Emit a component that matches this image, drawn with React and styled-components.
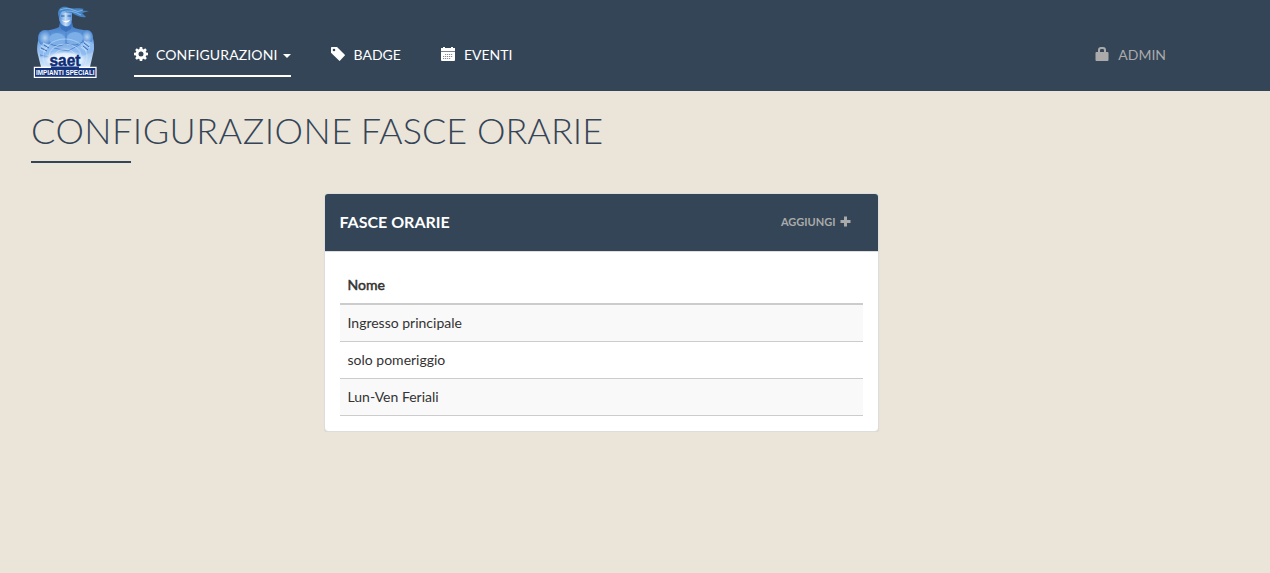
import React from "react";
import styled, { createGlobalStyle } from "styled-components";

const ink = "#344557";

const GlobalStyle = createGlobalStyle`
  * { box-sizing: border-box; }
  body {
    margin: 0;
    background: #ebe4d9;
    color: #333;
    font: 14px/20px Lato, "Liberation Sans", sans-serif;
  }
`;

const Navbar = styled.nav`
  display: flex;
  align-items: flex-start;
  height: 91px;
  padding: 0 104px 0 31px;
  background: ${ink};
`;

const Brand = styled.a`
  display: block;
  width: 69px;
  height: 82px;
  margin-right: 34px;
  svg { display: block; overflow: visible; }
`;

const Menu = styled.div`
  display: flex;
  flex: 1;
  gap: 40px;
  padding-top: 45px;
`;

const MenuItem = styled.a`
  display: flex;
  align-items: center;
  height: 32px;
  padding-bottom: 10px;
  color: ${(p) => (p.$muted ? "#aaa" : "#fff")};
  border-bottom: 2px solid ${(p) => (p.$active ? "#fff" : "transparent")};
  white-space: nowrap;
  letter-spacing: ${(p) => (p.$active ? "0.12px" : "0")};
  margin-left: ${(p) => (p.$muted ? "auto" : "0")};
  svg {
    display: block;
    overflow: visible;
    margin: -2px ${(p) => (p.$active ? "8px" : "9px")} 0 0;
    flex: none;
  }
`;

const Caret = styled.span`
  margin: 2px 0 0 5px;
  border-top: 4px solid currentColor;
  border-left: 4px solid transparent;
  border-right: 4px solid transparent;
`;

const Main = styled.main`
  padding: 19px 31px 0;
`;

const Title = styled.h1`
  margin: 0;
  font-size: 36px;
  font-weight: 300;
  line-height: 40px;
  color: ${ink};
  text-transform: uppercase;
`;

const LeadWord = styled.span`
  margin-right: -1.5px;
  letter-spacing: 0.48px;
`;

const TitleRule = styled.div`
  width: 100px;
  height: 2px;
  margin: 11px 0 30px;
  background: ${ink};
`;

const Panel = styled.section`
  width: 555px;
  margin-left: 293px;
  background: #fff;
  background-clip: padding-box;
  border: 1px solid #ddd;
  border-radius: 4px;
  box-shadow: 0 1px 1px rgba(0, 0, 0, 0.05);
`;

const PanelHeading = styled.header`
  display: flex;
  align-items: center;
  justify-content: space-between;
  height: 58px;
  padding: 0 27px 2px 14.5px;
  background: ${ink};
  border-bottom: 1px solid #ddd;
  border-radius: 3px 3px 0 0;
`;

const PanelTitle = styled.h3`
  margin: 0;
  font-size: 16px;
  font-weight: 700;
  color: #fff;
`;

const AddButton = styled.button`
  display: flex;
  align-items: center;
  gap: 5px;
  padding: 0;
  border: 0;
  background: none;
  color: #aaa;
  font: 700 11px/16px Lato, "Liberation Sans", sans-serif;
  svg { margin-left: -0.5px; }
`;

const PanelBody = styled.div`
  padding: 15px;
`;

const Table = styled.table`
  width: 523px;
  border-collapse: separate;
  border-spacing: 0;
`;

const HeadCell = styled.th`
  padding: 8px 7.5px;
  text-align: left;
  font-weight: 400;
  -webkit-text-stroke: 0.5px #333;
  border-bottom: 2px solid #ccc;
`;

const Row = styled.tr`
  &:nth-child(odd) { background: #f9f9f9; }
`;

const Cell = styled.td`
  padding: 8px 7.5px;
  border-bottom: 1px solid #ccc;
`;

const Logo = () => (
  <svg width="69" height="82" viewBox="0 0 69 82">
    <defs>
      <linearGradient id="face" x1="0" y1="0" x2="1" y2="0">
        <stop offset="0" stopColor="#4f8bd6" />
        <stop offset=".5" stopColor="#c4ddf7" />
        <stop offset="1" stopColor="#5a94db" />
      </linearGradient>
      <linearGradient id="torso" x1="0" y1="0" x2="0" y2="1">
        <stop offset="0" stopColor="#3a72be" />
        <stop offset=".4" stopColor="#6fa5e3" />
        <stop offset="1" stopColor="#d5e8fb" />
      </linearGradient>
      <radialGradient id="shoulder">
        <stop offset="0" stopColor="#b4d4f5" />
        <stop offset="1" stopColor="#4a86d0" />
      </radialGradient>
      <radialGradient id="glow">
        <stop offset="0" stopColor="#fff" />
        <stop offset=".65" stopColor="#e4f0fd" stopOpacity=".95" />
        <stop offset="1" stopColor="#a5cbf3" stopOpacity="0" />
      </radialGradient>
      <filter id="soften" x="-5%" y="-5%" width="110%" height="110%">
        <feGaussianBlur stdDeviation=".45" />
      </filter>
    </defs>
    <g filter="url(#soften)">
      <path d="M29 22H41L42 27C48 31 58 28 61 35C63 41 64 47 62 54L59 67H10L7 55C5 48 7 40 9 34C12 29 22 31 28 27Z" fill="url(#torso)" />
      <path d="M29 23C32 28 38 28 41 23L40 29L35 32L30 29Z" fill="#3a72bd" />
      <ellipse cx="14" cy="38" rx="7" ry="8" fill="url(#shoulder)" />
      <ellipse cx="56" cy="37" rx="6" ry="7" fill="url(#shoulder)" />
      <ellipse cx="26" cy="39" rx="8" ry="6" fill="#7baee7" />
      <ellipse cx="44" cy="38" rx="8" ry="6" fill="#7baee7" />
      <path d="M35 33V45M18 43Q27 49 35 43Q44 48 53 41" stroke="#4b80c8" strokeWidth="1" fill="none" />
      <path d="M8 47C13 41 18 44 23 48L36 50L49 44L57 41C63 42 65 48 61 52L49 57L36 55L22 60L9 57Z" fill="#8dbaf0" />
      <path d="M23 48L37 51L50 44M9 55L22 58L37 53" stroke="#4a7fc7" strokeWidth=".8" fill="none" />
      <path d="M12 43L18 46M10 46L16 49M9 49L15 52M53 41L59 45M52 44L59 48M50 47L56 51" stroke="#b7d5f6" strokeWidth="1.1" />
      <path d="M13 45L18 48M10 48L16 51M53 43L58 47M52 46L57 50" stroke="#26559f" strokeWidth=".8" />
      <ellipse cx="34" cy="60" rx="25" ry="10" fill="url(#glow)" />
      <g fill="none" stroke="#d8eafc" strokeWidth=".65" opacity=".8">
        <ellipse cx="34" cy="56" rx="10" ry="7" />
        <ellipse cx="34" cy="56" rx="16" ry="12" />
        <ellipse cx="34" cy="57" rx="22" ry="18" />
      </g>
      <path d="M28 12H41V20C40 26 37 27 34 26C31 25 28 22 28 19Z" fill="url(#face)" />
      <path d="M27 14C27 8 31 6 36 7C42 10 47 7 53 9L49 10.5L58 11L51 13L55 17C49 18 45 15 41 13L30 12L28 18Z" fill="#4684c6" />
      <path d="M29 10Q37 7 42 10T52 10M31 12Q40 9 50 15" fill="none" stroke="#8ec4ed" strokeWidth=".8" />
      <path d="M30 16H33.5M36.5 16H40" stroke="#2b5da5" strokeWidth="1" />
    </g>
    <path d="M30.5 20Q35 22 39.5 19.5Q36 25 30.5 20" fill="#fff" />
    <text x="18.5" y="66.4" textLength="31" lengthAdjust="spacingAndGlyphs" fill="#0e2c77" stroke="#0e2c77" strokeWidth=".5" fontFamily="Liberation Sans, sans-serif" fontSize="16.5" fontWeight="700">saet</text>
    <path d="M3.4 67.4H65V77.4H3.4Z" fill="#16357e" stroke="#fff" strokeWidth="1.2" />
    <rect x="20" y="66.5" width="28" height="1.5" fill="#16357e" />
    <text x="5" y="75.2" textLength="58.5" lengthAdjust="spacingAndGlyphs" fill="#fff" fontFamily="Liberation Sans, sans-serif" fontSize="7.7" fontWeight="700">IMPIANTI SPECIALI</text>
  </svg>
);

const CogIcon = () => (
  <svg width="14" height="14" viewBox="0 0 14 14" fill="currentColor" fillRule="evenodd">
    <path d="M5.8 0H8.2L8.6 2L9.6 2.4L11.2 1.3L12.8 2.9L11.7 4.5L12.1 5.4L14 5.8V8.2L12.1 8.6L11.7 9.6L12.8 11.2L11.2 12.8L9.6 11.7L8.6 12.1L8.2 14H5.8L5.4 12.1L4.4 11.7L2.8 12.8L1.2 11.2L2.3 9.6L1.9 8.6L0 8.2V5.8L1.9 5.4L2.3 4.5L1.2 2.9L2.8 1.3L4.4 2.4L5.4 2ZM7 4.5A2.5 2.5 0 1 0 7 9.5A2.5 2.5 0 1 0 7 4.5Z" />
  </svg>
);

const TagIcon = () => (
  <svg width="14" height="14" viewBox="0 0 14 14" fill="currentColor" fillRule="evenodd">
    <path d="M0 .7Q0 0 .7 0H6L13.8 7.7Q14.3 8.1 13.8 8.6L8.9 13.7Q8.4 14.1 8 13.6L0 5.7ZM3 1.7A1.3 1.3 0 1 0 3 4.3A1.3 1.3 0 1 0 3 1.7Z" />
  </svg>
);

const CalendarIcon = () => (
  <svg width="14" height="14" viewBox="0 0 14 14">
    <path d="M0 1H2V0H4V1H10V0H12V1H14V4H0Z" fill="#fff" />
    <path d="M0 4H14V5H0Z" fill="#78838f" />
    <path d="M0 5H14V13Q14 14 13 14H1Q0 14 0 13Z" fill="#fff" />
    <path d="M4 7.5H12M2 9.5H12M2 11.5H10" stroke={ink} strokeWidth="1" strokeDasharray="1.2 .8" opacity=".6" />
  </svg>
);

const LockIcon = () => (
  <svg width="14" height="14" viewBox="0 0 14 14" fill="currentColor" fillRule="evenodd">
    <path d="M1 5H3V3Q3 0 6 0H8Q11 0 11 3V5H12.5Q13.5 5 13.5 6V13Q13.5 14 12.5 14H1.5Q.5 14 .5 13V6Q.5 5 1.5 5ZM5 5H9V3.4Q9 2 7.8 2H6.2Q5 2 5 3.4Z" />
  </svg>
);

const PlusIcon = () => (
  <svg width="11" height="11" viewBox="0 0 11 11" fill="currentColor">
    <path d="M4 .5H7V4H10.5V7H7V10.5H4V7H.5V4H4Z" />
  </svg>
);

const rows = ["Ingresso principale", "solo pomeriggio", "Lun-Ven Feriali"];

export default function App() {
  return (
    <>
      <GlobalStyle />
      <Navbar>
        <Brand><Logo /></Brand>
        <Menu>
          <MenuItem $active><CogIcon />CONFIGURAZIONI<Caret /></MenuItem>
          <MenuItem><TagIcon />BADGE</MenuItem>
          <MenuItem><CalendarIcon />EVENTI</MenuItem>
          <MenuItem $muted><LockIcon />ADMIN</MenuItem>
        </Menu>
      </Navbar>
      <Main>
        <Title><LeadWord>Configurazione</LeadWord> fasce orarie</Title>
        <TitleRule />
        <Panel>
          <PanelHeading>
            <PanelTitle>FASCE ORARIE</PanelTitle>
            <AddButton>AGGIUNGI<PlusIcon /></AddButton>
          </PanelHeading>
          <PanelBody>
            <Table>
              <thead><tr><HeadCell>Nome</HeadCell></tr></thead>
              <tbody>
                {rows.map((name) => <Row key={name}><Cell>{name}</Cell></Row>)}
              </tbody>
            </Table>
          </PanelBody>
        </Panel>
      </Main>
    </>
  );
}
